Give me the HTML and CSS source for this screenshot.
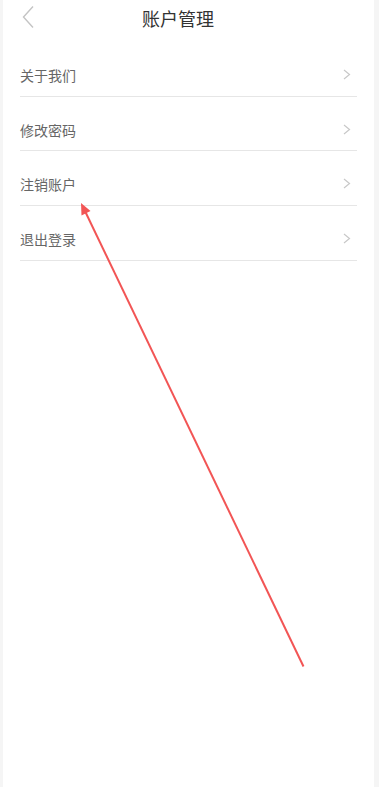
FILE: index.html
```html
<!DOCTYPE html>
<html lang="zh-CN">
<head>
    <meta charset="UTF-8">
    <meta name="viewport" content="width=device-width, initial-scale=1.0">
    <title>账户管理</title>
    <link rel="stylesheet" href="styles.css">
</head>
<body>
    <div class="page">
        <div class="header">
            <svg class="back" width="14" height="24" viewBox="0 0 14 24">
                <polyline points="11,1.5 1.5,12 11,22.5" fill="none" stroke="#c4c4c4" stroke-width="1.4"/>
            </svg>
            <div class="title">账户管理</div>
        </div>
        <div class="menu">
            <div class="menu-row">
                <span class="menu-text">关于我们</span>
                <svg class="arrow-right" width="8" height="12" viewBox="0 0 8 12">
                    <polyline points="1,1 6.5,5.5 1,10" fill="none" stroke="#c8c8c8" stroke-width="1.2"/>
                </svg>
            </div>
            <div class="menu-row">
                <span class="menu-text">修改密码</span>
                <svg class="arrow-right" width="8" height="12" viewBox="0 0 8 12">
                    <polyline points="1,1 6.5,5.5 1,10" fill="none" stroke="#c8c8c8" stroke-width="1.2"/>
                </svg>
            </div>
            <div class="menu-row">
                <span class="menu-text">注销账户</span>
                <svg class="arrow-right" width="8" height="12" viewBox="0 0 8 12">
                    <polyline points="1,1 6.5,5.5 1,10" fill="none" stroke="#c8c8c8" stroke-width="1.2"/>
                </svg>
            </div>
            <div class="menu-row">
                <span class="menu-text">退出登录</span>
                <svg class="arrow-right" width="8" height="12" viewBox="0 0 8 12">
                    <polyline points="1,1 6.5,5.5 1,10" fill="none" stroke="#c8c8c8" stroke-width="1.2"/>
                </svg>
            </div>
        </div>
        <!-- red annotation arrow drawn over the page -->
        <svg class="annotation" width="379" height="787" viewBox="0 0 379 787">
            <line x1="303.5" y1="666.5" x2="84" y2="209" stroke="#f25555" stroke-width="2"/>
            <polygon points="81,203 81.5,215.5 90.5,211" fill="#f25555"/>
        </svg>
    </div>
</body>
</html>
```

FILE: styles.css
```css
body {
    margin: 0;
    padding: 0;
    background-color: #ffffff;
    font-family: "Noto Sans CJK SC", "Noto Sans", sans-serif;
}
.page {
    position: relative;
    height: 787px;
    box-sizing: border-box;
    border-left: 3px solid #f5f5f5;
    border-right: 5px solid #f5f5f5;
    background-color: #ffffff;
    overflow: hidden;
}
.header {
    position: relative;
    height: 42px;
}
.back {
    position: absolute;
    left: 19px;
    top: 5px;
}
.title {
    line-height: 36px;
    font-size: 18px;
    color: #333333;
    text-align: center;
    padding-right: 21px;
}
.menu {
    padding: 0 17px 0 17px;
}
.menu-row {
    display: flex;
    justify-content: space-between;
    align-items: center;
    height: 53.7px;
    box-sizing: content-box;
    padding: 0;
    border-bottom: 1px solid #e6e6e6;
}
.menu-text {
    font-size: 14px;
    color: #666666;
    line-height: 20px;
    margin-top: 12px;
}
.arrow-right {
    margin-top: 12px;
    margin-right: 6px;
}
.annotation {
    position: absolute;
    left: -3px;
    top: 0;
    pointer-events: none;
}
```
